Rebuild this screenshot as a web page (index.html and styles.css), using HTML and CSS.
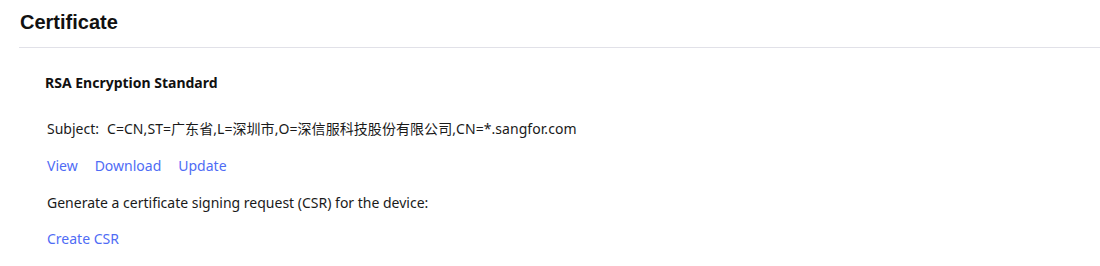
FILE: index.html
```html
<!DOCTYPE html>
<html>
<head>
<meta charset="utf-8">
<link rel="stylesheet" href="styles.css">
</head>
<body>
<div class="page">
  <div class="header"><h1 class="title">Certificate</h1></div>
  <div class="content">
    <h2 class="section-title">RSA Encryption Standard</h2>
    <div class="row subject"><span class="label">Subject:</span><span class="value">C=CN,ST=广东省,L=深圳市,O=深信服科技股份有限公司,CN=*.sangfor.com</span></div>
    <div class="row links"><a class="link">View</a><a class="link">Download</a><a class="link">Update</a></div>
    <div class="row">Generate a certificate signing request (CSR) for the device:</div>
    <div class="row links last"><a class="link">Create CSR</a></div>
  </div>
</div>
</body>
</html>
```
FILE: styles.css
```css
* { box-sizing: border-box; }
body {
  margin: 0;
  background: #fff;
  font-family: "Noto Sans", "Noto Sans CJK SC", sans-serif;
  font-size: 14px;
  color: #1a1a1a;
}
.page { padding: 0 0 0 19px; }
.header {
  height: 48px;
  border-bottom: 1px solid #e1e1e8;
  display: flex;
  align-items: flex-start;
}
.title {
  margin: 8px 0 0 1px;
  font-family: "Liberation Sans", Arial, sans-serif;
  font-size: 20px;
  font-weight: bold;
  line-height: 28px;
  color: #111;
}
.content { padding: 25px 0 0 26px; }
.section-title {
  margin: 0;
  font-size: 14px;
  font-weight: bold;
  line-height: 20px;
  color: #111;
}
.row {
  margin-left: 2px;
  line-height: 20px;
  margin-top: 17px;
}
.subject { margin-top: 26px; }
.label { margin-right: 8px; }
.value { letter-spacing: 0.06px; }
.links { display: flex; gap: 17px; }
.last { margin-top: 16px; }
.link { color: #4f6cf5; cursor: pointer; }
```
